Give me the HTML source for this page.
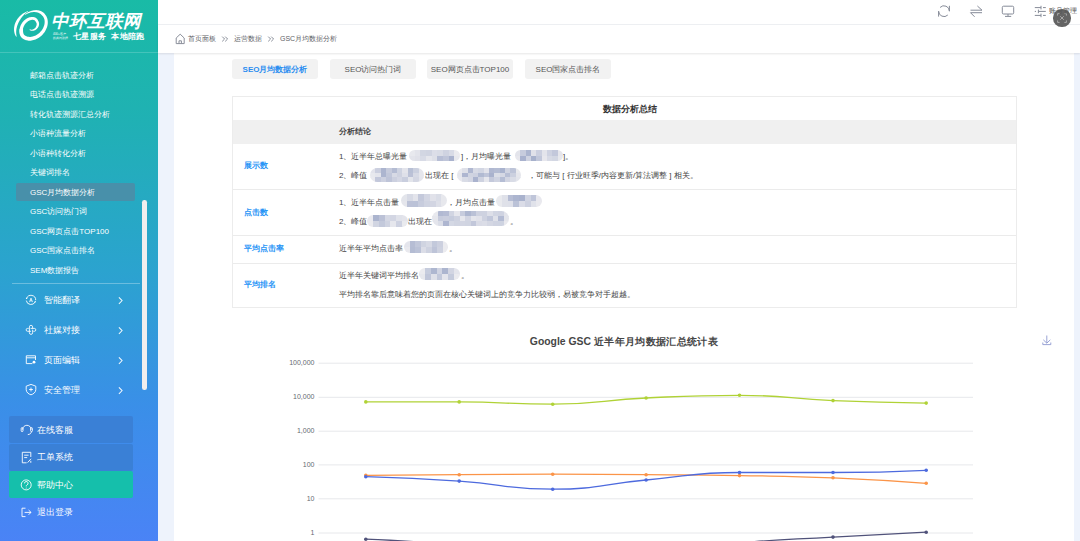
<!DOCTYPE html>
<html><head><meta charset="utf-8">
<style>
*{margin:0;padding:0;box-sizing:border-box}
html,body{width:1080px;height:541px;overflow:hidden;background:#fff;font-family:"Liberation Sans",sans-serif}
.abs{position:absolute}
#side{position:absolute;left:0;top:0;width:158px;height:541px;background:linear-gradient(180deg,#19bba6 0%,#1fb2b2 20%,#2ba3cf 50%,#3a8fe8 75%,#4a83f6 100%)}
.mi{position:absolute;left:30px;font-size:8px;color:#fff;white-space:nowrap;line-height:10px}
.sep{position:absolute;left:0;width:158px;height:1px;background:rgba(255,255,255,0.18)}
.grp{position:absolute;left:43.5px;font-size:9.4px;color:#fff;line-height:12px;white-space:nowrap;margin-top:0.3px}
.arr{position:absolute;left:116.5px;width:4.5px;height:4.5px;border-right:0.9px solid rgba(255,255,255,0.95);border-top:0.9px solid rgba(255,255,255,0.95);transform:rotate(45deg)}
.btn{position:absolute;left:9px;width:124px;height:27px;border-radius:2px}
.bt{position:absolute;left:36.5px;font-size:9.4px;color:#fff;line-height:12px;white-space:nowrap}
#hdr{position:absolute;left:158px;top:0;width:922px;height:25px;background:#fff;border-bottom:1px solid #eef0f3}
#bc{position:absolute;z-index:2;left:158px;top:25px;width:922px;height:28px;background:#fff;box-shadow:0 1px 2px rgba(0,0,0,0.10)}
.bct{position:absolute;z-index:3;font-size:7px;color:#606266;line-height:9px;white-space:nowrap;top:34px}
#bg{position:absolute;left:158px;top:53px;width:922px;height:488px;background:#eef3fc}
#panel{position:absolute;left:174px;top:53px;width:900px;height:488px;background:#fff}
.tab{position:absolute;top:58.5px;height:20px;width:86px;background:#f2f2f2;border-radius:3px;font-size:8px;color:#555;text-align:center;line-height:21.5px;white-space:nowrap}
#card{position:absolute;left:232px;top:96px;width:785px;height:212px;border:1px solid #ececec;background:#fff}
.t8{position:absolute;font-size:8px;line-height:10px;white-space:nowrap;color:#444;margin-top:0.8px}
.blue{color:#2894f6;font-weight:bold}
.hl{position:absolute;left:233px;width:783px;height:1px;background:#ebebeb}
.blur{position:absolute;filter:blur(1px);background:#c5cad8}
</style></head><body>
<div id="side">
  <svg class="abs" style="left:0;top:0" width="60" height="50" viewBox="0 0 60 50"><path d="M25.30 14.74 L26.28 14.18 L27.27 13.69 L28.27 13.26 L29.28 12.89 L30.27 12.59 L31.26 12.36 L32.24 12.19 L33.20 12.09 L34.13 12.06 L35.04 12.09 L35.91 12.18 L36.75 12.33 L37.55 12.53 L38.30 12.79 L39.00 13.10 L39.66 13.46 L40.28 13.83 L40.87 14.23 L41.41 14.67 L41.90 15.14 L42.35 15.66 L42.86 16.26 L43.25 16.81 L43.60 17.40 L43.90 18.02 L44.15 18.67 L44.36 19.35 L44.51 20.05 L44.61 20.78 L44.66 21.54 L44.66 22.31 L44.60 23.09 L44.49 23.89 L44.33 24.69 L44.11 25.50 L43.84 26.31 L43.52 27.11 L43.15 27.90 L42.74 28.68 L42.27 29.44 L41.76 30.18 L41.22 30.90 L40.63 31.59 L40.01 32.25 L39.35 32.88 L38.67 33.46 L37.96 34.01 L37.23 34.52 L36.49 34.98 L35.73 35.39 L34.96 35.76 L34.18 36.08 L33.41 36.34 L32.64 36.56 L31.87 36.72 L31.12 36.83 L30.38 36.89 L29.66 36.90 L28.96 36.87 L28.29 36.79 L27.64 36.67 L27.02 36.51 L26.43 36.30 L25.88 36.06 L25.36 35.77 L24.87 35.45 L24.42 35.09 L24.00 34.69 L23.90 34.49 L23.64 33.96 L23.43 33.40 L23.26 32.82 L23.14 32.22 L23.06 31.61 L23.03 30.98 L23.04 30.34 L23.10 29.70 L22.96 29.01 L23.10 28.35 L23.28 27.69 L23.51 27.04 L23.77 26.41 L24.07 25.79 L24.41 25.18 L24.77 24.61 L25.17 24.05 L25.59 23.52 L26.03 23.03 L26.50 22.56 L26.98 22.13 L27.47 21.73 L27.96 21.37 L28.47 21.05 L28.97 20.77 L29.48 20.52 L29.98 20.32 L30.47 20.15 L30.95 20.01 L31.41 19.92 L31.86 19.86 L32.28 19.83 L32.69 19.83 L33.07 19.86 L33.43 19.92 L33.76 20.00 L34.06 20.11 L34.34 20.23 L34.59 20.37 L34.82 20.52 L35.03 20.69 L35.21 20.88 L35.37 21.07 L35.51 21.28 L35.63 21.49 L35.72 21.72 L36.08 22.34 L36.20 22.52 L36.31 22.70 L36.41 22.90 L36.49 23.11 L36.56 23.34 L36.61 23.57 L36.65 23.82 L36.67 24.07 L36.66 24.34 L36.64 24.61 L36.61 24.88 L36.55 25.16 L36.47 25.45 L36.39 25.73 L36.30 26.02 L36.18 26.31 L36.05 26.59 L35.90 26.87 L35.74 27.14 L35.56 27.40 L35.36 27.66 L35.16 27.90 L34.94 28.13 L34.71 28.35 L34.48 28.55 L34.23 28.74 L33.98 28.92 L33.73 29.07 L33.47 29.21 L33.21 29.34 L32.94 29.45 L32.68 29.53 L32.42 29.60 L32.16 29.66 L31.91 29.69 L31.66 29.71 L31.42 29.71 L31.18 29.70 L30.95 29.66 L30.73 29.61 L30.51 29.55 L30.31 29.47 L30.11 29.37 L29.93 29.25 L29.48 29.76 L29.68 29.95 L29.90 30.13 L30.14 30.29 L30.40 30.44 L30.67 30.56 L30.96 30.67 L31.27 30.75 L31.58 30.81 L31.91 30.85 L32.25 30.86 L32.59 30.85 L32.94 30.82 L33.30 30.76 L33.65 30.69 L34.01 30.58 L34.37 30.46 L34.73 30.31 L35.08 30.14 L35.43 29.94 L35.77 29.73 L36.10 29.49 L36.43 29.24 L36.74 28.96 L37.04 28.67 L37.32 28.36 L37.60 28.03 L37.85 27.69 L38.09 27.33 L38.30 26.96 L38.50 26.58 L38.67 26.19 L38.81 25.78 L38.91 25.36 L39.00 24.94 L39.05 24.52 L39.08 24.09 L39.08 23.66 L39.04 23.24 L38.98 22.82 L38.88 22.40 L38.75 21.99 L38.59 21.60 L38.39 21.22 L38.17 20.85 L38.18 20.91 L38.01 20.45 L37.80 20.01 L37.55 19.58 L37.25 19.17 L36.91 18.78 L36.52 18.43 L36.10 18.10 L35.64 17.82 L35.14 17.57 L34.62 17.36 L34.06 17.20 L33.48 17.08 L32.88 17.00 L32.26 16.97 L31.63 16.99 L30.98 17.06 L30.32 17.17 L29.65 17.33 L28.98 17.54 L28.31 17.80 L27.63 18.10 L26.97 18.45 L26.31 18.84 L25.66 19.28 L25.02 19.77 L24.41 20.30 L23.81 20.87 L23.24 21.47 L22.69 22.12 L22.18 22.80 L21.70 23.52 L21.26 24.27 L20.86 25.05 L20.50 25.85 L20.19 26.67 L19.93 27.52 L19.73 28.38 L19.34 29.23 L19.26 30.13 L19.24 31.03 L19.29 31.94 L19.40 32.83 L19.58 33.72 L19.83 34.60 L20.16 35.45 L20.56 36.28 L21.27 37.33 L21.93 37.95 L22.64 38.51 L23.39 39.01 L24.19 39.45 L25.03 39.82 L25.91 40.13 L26.81 40.37 L27.74 40.54 L28.68 40.65 L29.65 40.67 L30.62 40.63 L31.60 40.52 L32.59 40.35 L33.57 40.11 L34.54 39.82 L35.51 39.46 L36.46 39.04 L37.40 38.56 L38.32 38.03 L39.21 37.45 L40.08 36.82 L40.91 36.14 L41.71 35.42 L42.48 34.65 L43.20 33.84 L43.89 33.00 L44.52 32.13 L45.11 31.22 L45.64 30.29 L46.12 29.34 L46.55 28.37 L46.91 27.39 L47.22 26.39 L47.46 25.39 L47.64 24.39 L47.75 23.38 L47.80 22.38 L47.78 21.40 L47.69 20.42 L47.52 19.47 L47.29 18.54 L47.00 17.64 L46.63 16.77 L46.19 15.94 L45.69 15.15 L45.13 14.42 L44.59 13.80 L43.96 13.12 L43.26 12.49 L42.51 11.92 L41.71 11.41 L40.85 11.00 L39.94 10.67 L39.00 10.42 L38.04 10.25 L37.05 10.14 L36.04 10.11 L35.03 10.15 L34.00 10.26 L32.96 10.44 L31.93 10.69 L30.90 11.01 L29.87 11.39 L28.85 11.84 L27.85 12.35 L26.86 12.92 L25.90 13.56 L24.96 14.25 Z" fill="#fff"/><path d="M16.66 36.50 L16.59 36.06 L16.51 35.63 L16.43 35.20 L16.36 34.77 L16.30 34.33 L16.26 33.90 L16.22 33.47 L16.20 33.03 L16.18 32.59 L16.18 32.15 L16.18 31.71 L16.20 31.27 L16.23 30.82 L16.27 30.38 L16.32 29.93 L16.38 29.48 L16.45 29.04 L16.53 28.59 L16.62 28.13 L16.72 27.68 L16.83 27.23 L16.95 26.78 L17.08 26.33 L17.22 25.87 L17.37 25.42 L17.53 24.97 L17.70 24.52 L17.88 24.06 L18.07 23.61 L18.26 23.16 L18.47 22.72 L18.68 22.27 L18.91 21.82 L19.14 21.38 L19.38 20.94 L19.63 20.50 L19.89 20.07 L20.16 19.63 L20.43 19.20 L20.72 18.78 L21.01 18.36 L21.31 17.94 L21.62 17.52 L21.94 17.11 L22.26 16.71 L22.59 16.31 L22.93 15.91 L23.28 15.52 L23.63 15.14 L23.99 14.76 L24.36 14.39 L24.73 14.02 L25.11 13.66 L25.49 13.30 L25.88 12.95 L26.28 12.60 L26.67 12.24 L27.10 11.96 L27.55 11.71 L28.01 11.48 L27.78 11.03 L27.32 11.27 L26.86 11.53 L26.39 11.77 L25.88 11.96 L25.38 12.19 L24.89 12.43 L24.41 12.69 L23.93 12.96 L23.46 13.25 L22.99 13.55 L22.53 13.87 L22.08 14.20 L21.64 14.55 L21.20 14.90 L20.77 15.27 L20.36 15.65 L19.95 16.04 L19.55 16.45 L19.16 16.86 L18.79 17.29 L18.42 17.72 L18.07 18.16 L17.73 18.62 L17.40 19.08 L17.09 19.55 L16.78 20.02 L16.50 20.51 L16.22 21.00 L15.97 21.50 L15.72 22.00 L15.49 22.51 L15.28 23.02 L15.08 23.54 L14.90 24.06 L14.74 24.58 L14.59 25.11 L14.46 25.63 L14.34 26.16 L14.25 26.69 L14.17 27.22 L14.10 27.75 L14.06 28.27 L14.03 28.80 L14.02 29.32 L14.03 29.84 L14.05 30.35 L14.09 30.86 L14.15 31.36 L14.23 31.86 L14.32 32.35 L14.43 32.84 L14.56 33.31 L14.70 33.78 L14.86 34.23 L15.04 34.68 L15.23 35.11 L15.45 35.54 L15.67 35.95 L15.92 36.34 L16.21 36.71 Z" fill="#fff"/></svg>
  <div class="abs" style="left:51px;top:10.5px;font-size:17.6px;line-height:20px;color:#fff;font-style:italic;font-weight:900;letter-spacing:0px;white-space:nowrap">中环互联网</div>
  <div class="abs" style="left:53px;top:33px;font-size:3px;line-height:3.5px;color:#fff;white-space:nowrap">400+客户<br>的共同选择</div>
  <div class="abs" style="left:73px;top:32.3px;font-size:8.3px;line-height:9px;font-weight:bold;color:#fff;white-space:nowrap;letter-spacing:0.3px">七星服务&nbsp;&nbsp;本地陪跑</div>
  <div class="sep" style="top:52px"></div>
  <div class="mi" style="top:71px">邮箱点击轨迹分析</div>
  <div class="mi" style="top:90px">电话点击轨迹溯源</div>
  <div class="mi" style="top:110px">转化轨迹溯源汇总分析</div>
  <div class="mi" style="top:129px">小语种流量分析</div>
  <div class="mi" style="top:149px">小语种转化分析</div>
  <div class="mi" style="top:168px">关键词排名</div>
  <div class="abs" style="left:16px;top:183px;width:119.3px;height:18px;background:#4890aa;border-radius:2px"></div>
  <div class="mi" style="top:188px">GSC月均数据分析</div>
  <div class="mi" style="top:207px">GSC访问热门词</div>
  <div class="mi" style="top:227px">GSC网页点击TOP100</div>
  <div class="mi" style="top:246px">GSC国家点击排名</div>
  <div class="mi" style="top:266px">SEM数据报告</div>
  <div class="abs" style="left:11.5px;top:283px;width:128.5px;height:1px;background:rgba(255,255,255,0.3)"></div>
  <div class="abs" style="left:142.3px;top:199.5px;width:4.7px;height:190.5px;background:#f0eeee;border-radius:2.3px"></div>

  <svg class="abs" style="left:0;top:0;z-index:3" width="158" height="541" viewBox="0 0 158 541" fill="none" stroke="#fff" stroke-width="0.9">
    <!-- translate -->
    <path d="M26.6 298.4 A4.7 4.7 0 0 1 35.7 300.2"/>
    <path d="M35.2 301.8 A4.7 4.7 0 0 1 26.3 300.6"/>
    <circle cx="26.6" cy="298.4" r="0.7" fill="#fff" stroke="none"/>
    <circle cx="35.2" cy="301.8" r="0.7" fill="#fff" stroke="none"/>
    <path d="M29.5 302.1 L31 298.1 L32.5 302.1 M30 300.8 H32" stroke-width="0.75"/>
    <!-- link -->
    <g stroke-width="0.85" stroke-linecap="round">
      <path d="M29.4 330.9 V326.9 A1.6 1.6 0 0 1 32.6 326.9 V328.1"/>
      <path d="M31 328.4 H34.35 A1.45 1.45 0 0 1 34.35 331.3 H33.7"/>
      <path d="M32.6 330.1 V332.8 A1.6 1.6 0 0 1 29.4 332.8 V331.8"/>
      <path d="M30.7 331.3 H27.6 A1.45 1.45 0 0 1 27.6 328.4 H28.3"/>
    </g>
    <!-- page edit -->
    <path d="M35.5 360 V355.8 H26.3 V363.6 H32.4"/>
    <path d="M26.3 357.8 H35.5"/>
    <circle cx="34" cy="362.2" r="1.4" fill="#fff" stroke="none"/>
    <!-- shield -->
    <path d="M31 384.4 L35.8 386.2 V389.6 C35.8 392.4 33.2 394.2 31 394.8 C28.8 394.2 26.2 392.4 26.2 389.6 V386.2 Z"/>
    <path d="M31 387.6 V391.4 M29.1 389.5 H32.9"/>
    <!-- headset -->
    <path d="M22.6 429.6 A4.3 4.3 0 0 1 31.2 429.6"/>
    <rect x="21.2" y="427.6" width="1.8" height="4" rx="0.9"/>
    <rect x="30.6" y="427.6" width="1.8" height="4" rx="0.9"/>
    <path d="M31.4 431.6 C31.2 433.4 30 434.4 27.8 434.6"/>
    <!-- doc -->
    <path d="M30.8 457 V452.3 H22.3 V462.8 H26.6"/>
    <path d="M24.2 455.2 H28.6 M24.2 457.6 H27.2"/>
    <path d="M27.6 462.6 L31 458.8"/>
    <path d="M30.8 462.8 V460.8"/>
    <!-- help -->
    <circle cx="26.2" cy="484.9" r="5"/>
    <path d="M24.5 483.4 A1.8 1.8 0 1 1 26.9 485 C26.3 485.3 26.2 485.8 26.2 486.4"/>
    <circle cx="26.2" cy="488" r="0.5" fill="#fff" stroke="none"/>
    <!-- logout -->
    <path d="M25.5 508.2 H22 V516.6 H25.5"/>
    <path d="M24.6 512.4 H31 M28.6 510 L31 512.4 L28.6 514.8"/>
  </svg>
  <div class="grp" style="top:294px">智能翻译</div>
  <div class="arr" style="top:298px"></div>
  <div class="grp" style="top:324px">社媒对接</div>
  <div class="arr" style="top:328px"></div>
  <div class="grp" style="top:354px">页面编辑</div>
  <div class="arr" style="top:358px"></div>
  <div class="grp" style="top:384px">安全管理</div>
  <div class="arr" style="top:388px"></div>
  <div class="btn" style="top:416px;background:#3a80d6"></div>
  <div class="btn" style="top:444px;background:#3a80d6"></div>
  <div class="btn" style="top:471px;background:#15bfab"></div>
  <div class="bt" style="top:424px">在线客服</div>
  <div class="bt" style="top:451px">工单系统</div>
  <div class="bt" style="top:479px">帮助中心</div>
  <div class="bt" style="top:506px">退出登录</div>
</div>

<div id="hdr"></div>
<div id="bc"></div>
<div id="bg"></div>
<div id="panel"></div>
<div class="bct" style="left:188px">首页面板</div>
<svg class="abs" style="left:221px;top:35px;z-index:3" width="8" height="8" viewBox="0 0 8 8" fill="none" stroke="#8a8f9a" stroke-width="1"><path d="M1.2 1.6 L3.6 4 L1.2 6.4 M4.2 1.6 L6.6 4 L4.2 6.4"/></svg>
<div class="bct" style="left:234px">运营数据</div>
<svg class="abs" style="left:267px;top:35px;z-index:3" width="8" height="8" viewBox="0 0 8 8" fill="none" stroke="#8a8f9a" stroke-width="1"><path d="M1.2 1.6 L3.6 4 L1.2 6.4 M4.2 1.6 L6.6 4 L4.2 6.4"/></svg>
<div class="bct" style="left:280px">GSC月均数据分析</div>

<div class="tab" style="left:232px;color:#2a8df0;font-weight:bold">SEO月均数据分析</div>
<div class="tab" style="left:330px">SEO访问热门词</div>
<div class="tab" style="left:427px">SEO网页点击TOP100</div>
<div class="tab" style="left:525px">SEO国家点击排名</div>

<div id="card"></div>
<div class="t8" style="left:603px;top:103px;font-size:9px;font-weight:bold;color:#333">数据分析总结</div>
<div class="abs" style="left:233px;top:120px;width:783px;height:24px;background:#f0f0f0"></div>
<div class="t8" style="left:339px;top:126px;font-weight:bold;color:#444">分析结论</div>


<!-- row 1 -->
<div class="t8 blue" style="left:244px;top:160px">展示数</div>
<div class="t8" style="left:339px;top:151px">1、近半年总曝光量</div>
<div class="t8" style="left:461px;top:151px">]，月均曝光量</div>
<div class="t8" style="left:563px;top:151px">]。</div>
<div class="t8" style="left:339px;top:170px">2、峰值</div>
<div class="t8" style="left:425px;top:170px">出现在 [</div>
<div class="t8" style="left:528px;top:170px">，可能与 [ 行业旺季/内容更新/算法调整 ] 相关。</div>
<div class="hl" style="top:189px"></div>
<!-- row 2 -->
<div class="t8 blue" style="left:244px;top:207px">点击数</div>
<div class="t8" style="left:339px;top:197px">1、近半年点击量</div>
<div class="t8" style="left:447px;top:197px">，月均点击量</div>
<div class="t8" style="left:339px;top:216px">2、峰值</div>
<div class="t8" style="left:408px;top:216px">出现在</div>
<div class="t8" style="left:510px;top:216px">。</div>
<div class="hl" style="top:235px"></div>
<!-- row 3 -->
<div class="t8 blue" style="left:244px;top:243px">平均点击率</div>
<div class="t8" style="left:339px;top:243px">近半年平均点击率</div>
<div class="t8" style="left:449px;top:243px">。</div>
<div class="hl" style="top:263px"></div>
<!-- row 4 -->
<div class="t8 blue" style="left:244px;top:279px">平均排名</div>
<div class="t8" style="left:339px;top:270px">近半年关键词平均排名</div>
<div class="t8" style="left:461px;top:270px">。</div>
<div class="t8" style="left:339px;top:289px">平均排名靠后意味着您的页面在核心关键词上的竞争力比较弱，易被竞争对手超越。</div>

<!-- header icons -->
<svg class="abs" style="left:930px;top:0" width="150" height="30" viewBox="930 0 150 30" fill="none" stroke="#868b98" stroke-width="1">
  <path d="M940.1 7.45 A5.4 5.4 0 0 1 949.4 11.2 V5.8"/>
  <path d="M947.8 15 A5.4 5.4 0 0 1 938.6 11.2 V16.6"/>
  <path d="M970.5 10.2 H982 L977.4 6"/>
  <path d="M982 12.7 H970.5 L974.6 16.8"/>
  <rect x="1002.3" y="6.2" width="11.4" height="7.8" rx="1.2"/>
  <path d="M1008 14 V16 M1005 16.4 H1011.2"/>
  <path d="M1034.8 7.6 H1041 M1043 7.6 H1045.8 M1041 5.8 V9.4"/>
  <path d="M1034.8 11.4 H1036 M1038.4 11.4 H1045.8 M1038.4 9.6 V13.2"/>
  <path d="M1034.8 15.4 H1041 M1043 15.4 H1045.8 M1041 13.6 V17.2"/>
</svg>
<div class="abs" style="left:1053.3px;top:9.4px;width:17.4px;height:17.4px;border-radius:50%;background:#646464;z-index:4"></div>
<svg class="abs" style="left:1053px;top:9px;z-index:4" width="18" height="18" viewBox="0 0 18 18" fill="none" stroke="#b8b8b8" stroke-width="0.8">
  <path d="M4.6 6.6 V4.6 H6.6 M11.4 4.6 H13.4 V6.6 M13.4 11.4 V13.4 H11.4 M6.6 13.4 H4.6 V11.4 M7.2 7.2 L10.8 10.8 M10.8 7.2 L7.2 10.8"/>
</svg>
<div class="abs" style="left:1049px;top:6px;font-size:7.4px;line-height:10px;color:#555;white-space:nowrap;z-index:5">账号管理</div>
<!-- breadcrumb home -->
<svg class="abs" style="left:175px;top:33px;z-index:3" width="11" height="12" viewBox="0 0 11 12" fill="none" stroke="#8a8f9a" stroke-width="1">
  <path d="M1.2 10.6 V5 L5.2 1.2 L9.2 5 V10.6 Z"/>
  <path d="M4 10.6 V7.8 H6.4 V10.6"/>
</svg>
<!-- download icon -->
<svg class="abs" style="left:1040px;top:333px" width="14" height="14" viewBox="0 0 14 14" fill="none" stroke="#8e9ad0" stroke-width="0.9">
  <path d="M6.8 2.5 V10 M3.3 6.8 L6.8 10.2 L10.3 6.8 M2.8 9.5 V11.6 H10.8 V9.5"/>
</svg>
<div class="abs" style="left:409px;top:150px;width:51px;height:11px;border-radius:5.5px;overflow:hidden;filter:blur(0.45px)"><div class="abs" style="left:0.00px;top:0.00px;width:6.17px;height:6.00px;background:rgb(232,233,238)"></div><div class="abs" style="left:5.67px;top:0.00px;width:6.17px;height:6.00px;background:rgb(227,228,235)"></div><div class="abs" style="left:11.33px;top:0.00px;width:6.17px;height:6.00px;background:rgb(210,214,226)"></div><div class="abs" style="left:17.00px;top:0.00px;width:6.17px;height:6.00px;background:rgb(208,212,225)"></div><div class="abs" style="left:22.67px;top:0.00px;width:6.17px;height:6.00px;background:rgb(220,222,232)"></div><div class="abs" style="left:28.33px;top:0.00px;width:6.17px;height:6.00px;background:rgb(217,220,230)"></div><div class="abs" style="left:34.00px;top:0.00px;width:6.17px;height:6.00px;background:rgb(207,211,225)"></div><div class="abs" style="left:39.67px;top:0.00px;width:6.17px;height:6.00px;background:rgb(216,219,230)"></div><div class="abs" style="left:45.33px;top:0.00px;width:6.17px;height:6.00px;background:rgb(235,235,239)"></div><div class="abs" style="left:0.00px;top:5.50px;width:6.17px;height:6.00px;background:rgb(227,228,235)"></div><div class="abs" style="left:5.67px;top:5.50px;width:6.17px;height:6.00px;background:rgb(224,225,233)"></div><div class="abs" style="left:11.33px;top:5.50px;width:6.17px;height:6.00px;background:rgb(216,219,230)"></div><div class="abs" style="left:17.00px;top:5.50px;width:6.17px;height:6.00px;background:rgb(229,230,236)"></div><div class="abs" style="left:22.67px;top:5.50px;width:6.17px;height:6.00px;background:rgb(222,224,232)"></div><div class="abs" style="left:28.33px;top:5.50px;width:6.17px;height:6.00px;background:rgb(183,190,213)"></div><div class="abs" style="left:34.00px;top:5.50px;width:6.17px;height:6.00px;background:rgb(191,197,217)"></div><div class="abs" style="left:39.67px;top:5.50px;width:6.17px;height:6.00px;background:rgb(170,179,206)"></div><div class="abs" style="left:45.33px;top:5.50px;width:6.17px;height:6.00px;background:rgb(232,233,238)"></div></div>
<div class="abs" style="left:515px;top:150px;width:48px;height:11px;border-radius:5.5px;overflow:hidden;filter:blur(0.45px)"><div class="abs" style="left:0.00px;top:0.00px;width:5.83px;height:6.00px;background:rgb(227,228,235)"></div><div class="abs" style="left:5.33px;top:0.00px;width:5.83px;height:6.00px;background:rgb(199,204,221)"></div><div class="abs" style="left:10.67px;top:0.00px;width:5.83px;height:6.00px;background:rgb(172,181,207)"></div><div class="abs" style="left:16.00px;top:0.00px;width:5.83px;height:6.00px;background:rgb(224,225,233)"></div><div class="abs" style="left:21.33px;top:0.00px;width:5.83px;height:6.00px;background:rgb(203,207,223)"></div><div class="abs" style="left:26.67px;top:0.00px;width:5.83px;height:6.00px;background:rgb(227,228,235)"></div><div class="abs" style="left:32.00px;top:0.00px;width:5.83px;height:6.00px;background:rgb(206,210,225)"></div><div class="abs" style="left:37.33px;top:0.00px;width:5.83px;height:6.00px;background:rgb(195,200,219)"></div><div class="abs" style="left:42.67px;top:0.00px;width:5.83px;height:6.00px;background:rgb(230,230,236)"></div><div class="abs" style="left:0.00px;top:5.50px;width:5.83px;height:6.00px;background:rgb(231,231,237)"></div><div class="abs" style="left:5.33px;top:5.50px;width:5.83px;height:6.00px;background:rgb(169,178,206)"></div><div class="abs" style="left:10.67px;top:5.50px;width:5.83px;height:6.00px;background:rgb(207,211,225)"></div><div class="abs" style="left:16.00px;top:5.50px;width:5.83px;height:6.00px;background:rgb(167,177,204)"></div><div class="abs" style="left:21.33px;top:5.50px;width:5.83px;height:6.00px;background:rgb(193,199,218)"></div><div class="abs" style="left:26.67px;top:5.50px;width:5.83px;height:6.00px;background:rgb(231,231,237)"></div><div class="abs" style="left:32.00px;top:5.50px;width:5.83px;height:6.00px;background:rgb(215,218,229)"></div><div class="abs" style="left:37.33px;top:5.50px;width:5.83px;height:6.00px;background:rgb(211,215,227)"></div><div class="abs" style="left:42.67px;top:5.50px;width:5.83px;height:6.00px;background:rgb(231,232,237)"></div></div>
<div class="abs" style="left:370px;top:168px;width:54px;height:14px;border-radius:7.0px;overflow:hidden;filter:blur(0.45px)"><div class="abs" style="left:0.00px;top:0.00px;width:5.90px;height:5.17px;background:rgb(226,227,235)"></div><div class="abs" style="left:5.40px;top:0.00px;width:5.90px;height:5.17px;background:rgb(203,207,223)"></div><div class="abs" style="left:10.80px;top:0.00px;width:5.90px;height:5.17px;background:rgb(172,181,207)"></div><div class="abs" style="left:16.20px;top:0.00px;width:5.90px;height:5.17px;background:rgb(198,203,220)"></div><div class="abs" style="left:21.60px;top:0.00px;width:5.90px;height:5.17px;background:rgb(180,188,211)"></div><div class="abs" style="left:27.00px;top:0.00px;width:5.90px;height:5.17px;background:rgb(206,211,225)"></div><div class="abs" style="left:32.40px;top:0.00px;width:5.90px;height:5.17px;background:rgb(227,228,235)"></div><div class="abs" style="left:37.80px;top:0.00px;width:5.90px;height:5.17px;background:rgb(184,192,213)"></div><div class="abs" style="left:43.20px;top:0.00px;width:5.90px;height:5.17px;background:rgb(203,208,223)"></div><div class="abs" style="left:48.60px;top:0.00px;width:5.90px;height:5.17px;background:rgb(229,230,236)"></div><div class="abs" style="left:0.00px;top:4.67px;width:5.90px;height:5.17px;background:rgb(232,233,238)"></div><div class="abs" style="left:5.40px;top:4.67px;width:5.90px;height:5.17px;background:rgb(228,229,236)"></div><div class="abs" style="left:10.80px;top:4.67px;width:5.90px;height:5.17px;background:rgb(172,181,207)"></div><div class="abs" style="left:16.20px;top:4.67px;width:5.90px;height:5.17px;background:rgb(193,199,218)"></div><div class="abs" style="left:21.60px;top:4.67px;width:5.90px;height:5.17px;background:rgb(215,218,229)"></div><div class="abs" style="left:27.00px;top:4.67px;width:5.90px;height:5.17px;background:rgb(206,210,224)"></div><div class="abs" style="left:32.40px;top:4.67px;width:5.90px;height:5.17px;background:rgb(222,224,233)"></div><div class="abs" style="left:37.80px;top:4.67px;width:5.90px;height:5.17px;background:rgb(187,193,214)"></div><div class="abs" style="left:43.20px;top:4.67px;width:5.90px;height:5.17px;background:rgb(215,218,229)"></div><div class="abs" style="left:48.60px;top:4.67px;width:5.90px;height:5.17px;background:rgb(229,230,236)"></div><div class="abs" style="left:0.00px;top:9.33px;width:5.90px;height:5.17px;background:rgb(234,234,239)"></div><div class="abs" style="left:5.40px;top:9.33px;width:5.90px;height:5.17px;background:rgb(195,200,219)"></div><div class="abs" style="left:10.80px;top:9.33px;width:5.90px;height:5.17px;background:rgb(205,209,224)"></div><div class="abs" style="left:16.20px;top:9.33px;width:5.90px;height:5.17px;background:rgb(190,196,216)"></div><div class="abs" style="left:21.60px;top:9.33px;width:5.90px;height:5.17px;background:rgb(204,208,223)"></div><div class="abs" style="left:27.00px;top:9.33px;width:5.90px;height:5.17px;background:rgb(212,215,228)"></div><div class="abs" style="left:32.40px;top:9.33px;width:5.90px;height:5.17px;background:rgb(201,206,222)"></div><div class="abs" style="left:37.80px;top:9.33px;width:5.90px;height:5.17px;background:rgb(227,229,235)"></div><div class="abs" style="left:43.20px;top:9.33px;width:5.90px;height:5.17px;background:rgb(212,215,227)"></div><div class="abs" style="left:48.60px;top:9.33px;width:5.90px;height:5.17px;background:rgb(228,229,236)"></div></div>
<div class="abs" style="left:457px;top:168px;width:64px;height:14px;border-radius:7.0px;overflow:hidden;filter:blur(0.45px)"><div class="abs" style="left:0.00px;top:0.00px;width:5.83px;height:5.17px;background:rgb(233,233,238)"></div><div class="abs" style="left:5.33px;top:0.00px;width:5.83px;height:5.17px;background:rgb(222,224,232)"></div><div class="abs" style="left:10.67px;top:0.00px;width:5.83px;height:5.17px;background:rgb(176,184,209)"></div><div class="abs" style="left:16.00px;top:0.00px;width:5.83px;height:5.17px;background:rgb(215,218,229)"></div><div class="abs" style="left:21.33px;top:0.00px;width:5.83px;height:5.17px;background:rgb(210,214,227)"></div><div class="abs" style="left:26.67px;top:0.00px;width:5.83px;height:5.17px;background:rgb(226,227,235)"></div><div class="abs" style="left:32.00px;top:0.00px;width:5.83px;height:5.17px;background:rgb(176,184,209)"></div><div class="abs" style="left:37.33px;top:0.00px;width:5.83px;height:5.17px;background:rgb(180,188,211)"></div><div class="abs" style="left:42.67px;top:0.00px;width:5.83px;height:5.17px;background:rgb(169,179,206)"></div><div class="abs" style="left:48.00px;top:0.00px;width:5.83px;height:5.17px;background:rgb(207,211,225)"></div><div class="abs" style="left:53.33px;top:0.00px;width:5.83px;height:5.17px;background:rgb(189,196,216)"></div><div class="abs" style="left:58.67px;top:0.00px;width:5.83px;height:5.17px;background:rgb(233,234,238)"></div><div class="abs" style="left:0.00px;top:4.67px;width:5.83px;height:5.17px;background:rgb(229,230,236)"></div><div class="abs" style="left:5.33px;top:4.67px;width:5.83px;height:5.17px;background:rgb(174,182,208)"></div><div class="abs" style="left:10.67px;top:4.67px;width:5.83px;height:5.17px;background:rgb(208,212,225)"></div><div class="abs" style="left:16.00px;top:4.67px;width:5.83px;height:5.17px;background:rgb(205,209,224)"></div><div class="abs" style="left:21.33px;top:4.67px;width:5.83px;height:5.17px;background:rgb(177,186,210)"></div><div class="abs" style="left:26.67px;top:4.67px;width:5.83px;height:5.17px;background:rgb(191,197,217)"></div><div class="abs" style="left:32.00px;top:4.67px;width:5.83px;height:5.17px;background:rgb(169,178,205)"></div><div class="abs" style="left:37.33px;top:4.67px;width:5.83px;height:5.17px;background:rgb(219,222,231)"></div><div class="abs" style="left:42.67px;top:4.67px;width:5.83px;height:5.17px;background:rgb(213,216,228)"></div><div class="abs" style="left:48.00px;top:4.67px;width:5.83px;height:5.17px;background:rgb(184,191,213)"></div><div class="abs" style="left:53.33px;top:4.67px;width:5.83px;height:5.17px;background:rgb(203,208,223)"></div><div class="abs" style="left:58.67px;top:4.67px;width:5.83px;height:5.17px;background:rgb(229,230,236)"></div><div class="abs" style="left:0.00px;top:9.33px;width:5.83px;height:5.17px;background:rgb(232,232,238)"></div><div class="abs" style="left:5.33px;top:9.33px;width:5.83px;height:5.17px;background:rgb(217,220,230)"></div><div class="abs" style="left:10.67px;top:9.33px;width:5.83px;height:5.17px;background:rgb(211,214,227)"></div><div class="abs" style="left:16.00px;top:9.33px;width:5.83px;height:5.17px;background:rgb(170,179,206)"></div><div class="abs" style="left:21.33px;top:9.33px;width:5.83px;height:5.17px;background:rgb(206,210,224)"></div><div class="abs" style="left:26.67px;top:9.33px;width:5.83px;height:5.17px;background:rgb(230,231,237)"></div><div class="abs" style="left:32.00px;top:9.33px;width:5.83px;height:5.17px;background:rgb(196,201,219)"></div><div class="abs" style="left:37.33px;top:9.33px;width:5.83px;height:5.17px;background:rgb(207,211,225)"></div><div class="abs" style="left:42.67px;top:9.33px;width:5.83px;height:5.17px;background:rgb(181,189,212)"></div><div class="abs" style="left:48.00px;top:9.33px;width:5.83px;height:5.17px;background:rgb(210,213,226)"></div><div class="abs" style="left:53.33px;top:9.33px;width:5.83px;height:5.17px;background:rgb(217,220,230)"></div><div class="abs" style="left:58.67px;top:9.33px;width:5.83px;height:5.17px;background:rgb(226,228,235)"></div></div>
<div class="abs" style="left:401px;top:194px;width:46px;height:13px;border-radius:6.5px;overflow:hidden;filter:blur(0.45px)"><div class="abs" style="left:0.00px;top:0.00px;width:6.25px;height:7.00px;background:rgb(227,229,235)"></div><div class="abs" style="left:5.75px;top:0.00px;width:6.25px;height:7.00px;background:rgb(215,218,229)"></div><div class="abs" style="left:11.50px;top:0.00px;width:6.25px;height:7.00px;background:rgb(227,228,235)"></div><div class="abs" style="left:17.25px;top:0.00px;width:6.25px;height:7.00px;background:rgb(196,201,219)"></div><div class="abs" style="left:23.00px;top:0.00px;width:6.25px;height:7.00px;background:rgb(211,214,227)"></div><div class="abs" style="left:28.75px;top:0.00px;width:6.25px;height:7.00px;background:rgb(225,226,234)"></div><div class="abs" style="left:34.50px;top:0.00px;width:6.25px;height:7.00px;background:rgb(218,221,231)"></div><div class="abs" style="left:40.25px;top:0.00px;width:6.25px;height:7.00px;background:rgb(231,232,237)"></div><div class="abs" style="left:0.00px;top:6.50px;width:6.25px;height:7.00px;background:rgb(229,230,236)"></div><div class="abs" style="left:5.75px;top:6.50px;width:6.25px;height:7.00px;background:rgb(188,194,215)"></div><div class="abs" style="left:11.50px;top:6.50px;width:6.25px;height:7.00px;background:rgb(187,194,215)"></div><div class="abs" style="left:17.25px;top:6.50px;width:6.25px;height:7.00px;background:rgb(199,204,221)"></div><div class="abs" style="left:23.00px;top:6.50px;width:6.25px;height:7.00px;background:rgb(207,211,225)"></div><div class="abs" style="left:28.75px;top:6.50px;width:6.25px;height:7.00px;background:rgb(210,213,226)"></div><div class="abs" style="left:34.50px;top:6.50px;width:6.25px;height:7.00px;background:rgb(221,223,232)"></div><div class="abs" style="left:40.25px;top:6.50px;width:6.25px;height:7.00px;background:rgb(231,232,237)"></div></div>
<div class="abs" style="left:496px;top:195px;width:46px;height:12px;border-radius:6.0px;overflow:hidden;filter:blur(0.45px)"><div class="abs" style="left:0.00px;top:0.00px;width:6.25px;height:6.50px;background:rgb(233,234,238)"></div><div class="abs" style="left:5.75px;top:0.00px;width:6.25px;height:6.50px;background:rgb(223,225,233)"></div><div class="abs" style="left:11.50px;top:0.00px;width:6.25px;height:6.50px;background:rgb(182,189,212)"></div><div class="abs" style="left:17.25px;top:0.00px;width:6.25px;height:6.50px;background:rgb(172,181,207)"></div><div class="abs" style="left:23.00px;top:0.00px;width:6.25px;height:6.50px;background:rgb(169,178,205)"></div><div class="abs" style="left:28.75px;top:0.00px;width:6.25px;height:6.50px;background:rgb(208,212,226)"></div><div class="abs" style="left:34.50px;top:0.00px;width:6.25px;height:6.50px;background:rgb(191,197,217)"></div><div class="abs" style="left:40.25px;top:0.00px;width:6.25px;height:6.50px;background:rgb(232,232,238)"></div><div class="abs" style="left:0.00px;top:6.00px;width:6.25px;height:6.50px;background:rgb(233,234,238)"></div><div class="abs" style="left:5.75px;top:6.00px;width:6.25px;height:6.50px;background:rgb(223,225,233)"></div><div class="abs" style="left:11.50px;top:6.00px;width:6.25px;height:6.50px;background:rgb(222,224,233)"></div><div class="abs" style="left:17.25px;top:6.00px;width:6.25px;height:6.50px;background:rgb(187,194,215)"></div><div class="abs" style="left:23.00px;top:6.00px;width:6.25px;height:6.50px;background:rgb(218,220,231)"></div><div class="abs" style="left:28.75px;top:6.00px;width:6.25px;height:6.50px;background:rgb(205,209,224)"></div><div class="abs" style="left:34.50px;top:6.00px;width:6.25px;height:6.50px;background:rgb(224,226,234)"></div><div class="abs" style="left:40.25px;top:6.00px;width:6.25px;height:6.50px;background:rgb(233,233,238)"></div></div>
<div class="abs" style="left:367px;top:215px;width:41px;height:12px;border-radius:6.0px;overflow:hidden;filter:blur(0.45px)"><div class="abs" style="left:0.00px;top:0.00px;width:6.36px;height:6.50px;background:rgb(234,234,239)"></div><div class="abs" style="left:5.86px;top:0.00px;width:6.36px;height:6.50px;background:rgb(171,180,206)"></div><div class="abs" style="left:11.71px;top:0.00px;width:6.36px;height:6.50px;background:rgb(187,193,214)"></div><div class="abs" style="left:17.57px;top:0.00px;width:6.36px;height:6.50px;background:rgb(213,216,228)"></div><div class="abs" style="left:23.43px;top:0.00px;width:6.36px;height:6.50px;background:rgb(211,214,227)"></div><div class="abs" style="left:29.29px;top:0.00px;width:6.36px;height:6.50px;background:rgb(224,226,234)"></div><div class="abs" style="left:35.14px;top:0.00px;width:6.36px;height:6.50px;background:rgb(227,228,235)"></div><div class="abs" style="left:0.00px;top:6.00px;width:6.36px;height:6.50px;background:rgb(235,235,239)"></div><div class="abs" style="left:5.86px;top:6.00px;width:6.36px;height:6.50px;background:rgb(209,213,226)"></div><div class="abs" style="left:11.71px;top:6.00px;width:6.36px;height:6.50px;background:rgb(195,201,219)"></div><div class="abs" style="left:17.57px;top:6.00px;width:6.36px;height:6.50px;background:rgb(207,211,225)"></div><div class="abs" style="left:23.43px;top:6.00px;width:6.36px;height:6.50px;background:rgb(230,231,237)"></div><div class="abs" style="left:29.29px;top:6.00px;width:6.36px;height:6.50px;background:rgb(206,210,225)"></div><div class="abs" style="left:35.14px;top:6.00px;width:6.36px;height:6.50px;background:rgb(233,234,238)"></div></div>
<div class="abs" style="left:432px;top:211px;width:77px;height:15px;border-radius:7.5px;overflow:hidden;filter:blur(0.45px)"><div class="abs" style="left:0.00px;top:0.00px;width:6.00px;height:5.50px;background:rgb(232,233,238)"></div><div class="abs" style="left:5.50px;top:0.00px;width:6.00px;height:5.50px;background:rgb(177,185,210)"></div><div class="abs" style="left:11.00px;top:0.00px;width:6.00px;height:5.50px;background:rgb(181,188,212)"></div><div class="abs" style="left:16.50px;top:0.00px;width:6.00px;height:5.50px;background:rgb(209,213,226)"></div><div class="abs" style="left:22.00px;top:0.00px;width:6.00px;height:5.50px;background:rgb(230,231,237)"></div><div class="abs" style="left:27.50px;top:0.00px;width:6.00px;height:5.50px;background:rgb(199,204,221)"></div><div class="abs" style="left:33.00px;top:0.00px;width:6.00px;height:5.50px;background:rgb(174,183,208)"></div><div class="abs" style="left:38.50px;top:0.00px;width:6.00px;height:5.50px;background:rgb(186,193,214)"></div><div class="abs" style="left:44.00px;top:0.00px;width:6.00px;height:5.50px;background:rgb(206,210,224)"></div><div class="abs" style="left:49.50px;top:0.00px;width:6.00px;height:5.50px;background:rgb(206,210,224)"></div><div class="abs" style="left:55.00px;top:0.00px;width:6.00px;height:5.50px;background:rgb(221,223,232)"></div><div class="abs" style="left:60.50px;top:0.00px;width:6.00px;height:5.50px;background:rgb(209,213,226)"></div><div class="abs" style="left:66.00px;top:0.00px;width:6.00px;height:5.50px;background:rgb(207,211,225)"></div><div class="abs" style="left:71.50px;top:0.00px;width:6.00px;height:5.50px;background:rgb(227,228,235)"></div><div class="abs" style="left:0.00px;top:5.00px;width:6.00px;height:5.50px;background:rgb(229,230,236)"></div><div class="abs" style="left:5.50px;top:5.00px;width:6.00px;height:5.50px;background:rgb(199,204,221)"></div><div class="abs" style="left:11.00px;top:5.00px;width:6.00px;height:5.50px;background:rgb(202,206,222)"></div><div class="abs" style="left:16.50px;top:5.00px;width:6.00px;height:5.50px;background:rgb(198,204,221)"></div><div class="abs" style="left:22.00px;top:5.00px;width:6.00px;height:5.50px;background:rgb(206,210,224)"></div><div class="abs" style="left:27.50px;top:5.00px;width:6.00px;height:5.50px;background:rgb(230,231,237)"></div><div class="abs" style="left:33.00px;top:5.00px;width:6.00px;height:5.50px;background:rgb(210,213,226)"></div><div class="abs" style="left:38.50px;top:5.00px;width:6.00px;height:5.50px;background:rgb(229,230,236)"></div><div class="abs" style="left:44.00px;top:5.00px;width:6.00px;height:5.50px;background:rgb(225,226,234)"></div><div class="abs" style="left:49.50px;top:5.00px;width:6.00px;height:5.50px;background:rgb(206,210,224)"></div><div class="abs" style="left:55.00px;top:5.00px;width:6.00px;height:5.50px;background:rgb(193,199,218)"></div><div class="abs" style="left:60.50px;top:5.00px;width:6.00px;height:5.50px;background:rgb(223,225,233)"></div><div class="abs" style="left:66.00px;top:5.00px;width:6.00px;height:5.50px;background:rgb(179,187,211)"></div><div class="abs" style="left:71.50px;top:5.00px;width:6.00px;height:5.50px;background:rgb(228,229,235)"></div><div class="abs" style="left:0.00px;top:10.00px;width:6.00px;height:5.50px;background:rgb(228,229,236)"></div><div class="abs" style="left:5.50px;top:10.00px;width:6.00px;height:5.50px;background:rgb(218,221,231)"></div><div class="abs" style="left:11.00px;top:10.00px;width:6.00px;height:5.50px;background:rgb(174,182,208)"></div><div class="abs" style="left:16.50px;top:10.00px;width:6.00px;height:5.50px;background:rgb(212,216,228)"></div><div class="abs" style="left:22.00px;top:10.00px;width:6.00px;height:5.50px;background:rgb(208,212,225)"></div><div class="abs" style="left:27.50px;top:10.00px;width:6.00px;height:5.50px;background:rgb(210,213,226)"></div><div class="abs" style="left:33.00px;top:10.00px;width:6.00px;height:5.50px;background:rgb(208,212,225)"></div><div class="abs" style="left:38.50px;top:10.00px;width:6.00px;height:5.50px;background:rgb(194,199,218)"></div><div class="abs" style="left:44.00px;top:10.00px;width:6.00px;height:5.50px;background:rgb(217,219,230)"></div><div class="abs" style="left:49.50px;top:10.00px;width:6.00px;height:5.50px;background:rgb(219,221,231)"></div><div class="abs" style="left:55.00px;top:10.00px;width:6.00px;height:5.50px;background:rgb(212,215,227)"></div><div class="abs" style="left:60.50px;top:10.00px;width:6.00px;height:5.50px;background:rgb(207,211,225)"></div><div class="abs" style="left:66.00px;top:10.00px;width:6.00px;height:5.50px;background:rgb(206,211,225)"></div><div class="abs" style="left:71.50px;top:10.00px;width:6.00px;height:5.50px;background:rgb(233,233,238)"></div></div>
<div class="abs" style="left:404px;top:241px;width:44px;height:12px;border-radius:6.0px;overflow:hidden;filter:blur(0.45px)"><div class="abs" style="left:0.00px;top:0.00px;width:6.00px;height:6.50px;background:rgb(228,229,236)"></div><div class="abs" style="left:5.50px;top:0.00px;width:6.00px;height:6.50px;background:rgb(182,189,212)"></div><div class="abs" style="left:11.00px;top:0.00px;width:6.00px;height:6.50px;background:rgb(193,199,218)"></div><div class="abs" style="left:16.50px;top:0.00px;width:6.00px;height:6.50px;background:rgb(208,212,225)"></div><div class="abs" style="left:22.00px;top:0.00px;width:6.00px;height:6.50px;background:rgb(215,218,229)"></div><div class="abs" style="left:27.50px;top:0.00px;width:6.00px;height:6.50px;background:rgb(195,201,219)"></div><div class="abs" style="left:33.00px;top:0.00px;width:6.00px;height:6.50px;background:rgb(204,208,223)"></div><div class="abs" style="left:38.50px;top:0.00px;width:6.00px;height:6.50px;background:rgb(235,235,239)"></div><div class="abs" style="left:0.00px;top:6.00px;width:6.00px;height:6.50px;background:rgb(233,233,238)"></div><div class="abs" style="left:5.50px;top:6.00px;width:6.00px;height:6.50px;background:rgb(180,188,211)"></div><div class="abs" style="left:11.00px;top:6.00px;width:6.00px;height:6.50px;background:rgb(187,194,215)"></div><div class="abs" style="left:16.50px;top:6.00px;width:6.00px;height:6.50px;background:rgb(219,221,231)"></div><div class="abs" style="left:22.00px;top:6.00px;width:6.00px;height:6.50px;background:rgb(206,210,224)"></div><div class="abs" style="left:27.50px;top:6.00px;width:6.00px;height:6.50px;background:rgb(190,196,216)"></div><div class="abs" style="left:33.00px;top:6.00px;width:6.00px;height:6.50px;background:rgb(206,210,224)"></div><div class="abs" style="left:38.50px;top:6.00px;width:6.00px;height:6.50px;background:rgb(235,235,239)"></div></div>
<div class="abs" style="left:419px;top:268px;width:41px;height:12px;border-radius:6.0px;overflow:hidden;filter:blur(0.45px)"><div class="abs" style="left:0.00px;top:0.00px;width:6.36px;height:6.50px;background:rgb(235,235,239)"></div><div class="abs" style="left:5.86px;top:0.00px;width:6.36px;height:6.50px;background:rgb(198,204,221)"></div><div class="abs" style="left:11.71px;top:0.00px;width:6.36px;height:6.50px;background:rgb(174,183,208)"></div><div class="abs" style="left:17.57px;top:0.00px;width:6.36px;height:6.50px;background:rgb(208,212,226)"></div><div class="abs" style="left:23.43px;top:0.00px;width:6.36px;height:6.50px;background:rgb(172,181,207)"></div><div class="abs" style="left:29.29px;top:0.00px;width:6.36px;height:6.50px;background:rgb(210,213,226)"></div><div class="abs" style="left:35.14px;top:0.00px;width:6.36px;height:6.50px;background:rgb(228,229,236)"></div><div class="abs" style="left:0.00px;top:6.00px;width:6.36px;height:6.50px;background:rgb(231,232,237)"></div><div class="abs" style="left:5.86px;top:6.00px;width:6.36px;height:6.50px;background:rgb(192,198,217)"></div><div class="abs" style="left:11.71px;top:6.00px;width:6.36px;height:6.50px;background:rgb(223,225,233)"></div><div class="abs" style="left:17.57px;top:6.00px;width:6.36px;height:6.50px;background:rgb(195,201,219)"></div><div class="abs" style="left:23.43px;top:6.00px;width:6.36px;height:6.50px;background:rgb(228,229,236)"></div><div class="abs" style="left:29.29px;top:6.00px;width:6.36px;height:6.50px;background:rgb(197,203,220)"></div><div class="abs" style="left:35.14px;top:6.00px;width:6.36px;height:6.50px;background:rgb(235,235,239)"></div></div>
<svg class="abs" style="left:0;top:0" width="1080" height="541" viewBox="0 0 1080 541">
<line x1="318.5" y1="363.2" x2="973" y2="363.2" stroke="#e7e8eb" stroke-width="1"/>
<line x1="318.5" y1="397.3" x2="973" y2="397.3" stroke="#e7e8eb" stroke-width="1"/>
<line x1="318.5" y1="431.2" x2="973" y2="431.2" stroke="#e7e8eb" stroke-width="1"/>
<line x1="318.5" y1="464.9" x2="973" y2="464.9" stroke="#e7e8eb" stroke-width="1"/>
<line x1="318.5" y1="498.8" x2="973" y2="498.8" stroke="#e7e8eb" stroke-width="1"/>
<line x1="318.5" y1="533" x2="973" y2="533" stroke="#e7e8eb" stroke-width="1"/>
<text x="314.5" y="365.0" text-anchor="end" font-family="Liberation Sans" font-size="7" fill="#666a72">100,000</text>
<text x="314.5" y="399.1" text-anchor="end" font-family="Liberation Sans" font-size="7" fill="#666a72">10,000</text>
<text x="314.5" y="433.0" text-anchor="end" font-family="Liberation Sans" font-size="7" fill="#666a72">1,000</text>
<text x="314.5" y="466.7" text-anchor="end" font-family="Liberation Sans" font-size="7" fill="#666a72">100</text>
<text x="314.5" y="500.6" text-anchor="end" font-family="Liberation Sans" font-size="7" fill="#666a72">10</text>
<text x="314.5" y="534.8" text-anchor="end" font-family="Liberation Sans" font-size="7" fill="#666a72">1</text>
<path d="M365.80 401.90 C365.80 401.90 412.51 401.90 459.20 401.90 C505.96 401.90 505.99 404.20 552.70 404.20 C599.44 404.20 599.36 400.23 646.10 398.00 C692.76 395.78 692.83 395.30 739.50 395.30 C786.28 395.30 786.22 398.65 833.00 400.60 C879.57 402.55 926.20 403.10 926.20 403.10" fill="none" stroke="#b0d236" stroke-width="1.3"/>
<circle cx="365.8" cy="401.9" r="1.8" fill="#b0d236"/>
<circle cx="459.2" cy="401.9" r="1.8" fill="#b0d236"/>
<circle cx="552.7" cy="404.2" r="1.8" fill="#b0d236"/>
<circle cx="646.1" cy="398" r="1.8" fill="#b0d236"/>
<circle cx="739.5" cy="395.3" r="1.8" fill="#b0d236"/>
<circle cx="833" cy="400.6" r="1.8" fill="#b0d236"/>
<circle cx="926.2" cy="403.1" r="1.8" fill="#b0d236"/>
<path d="M365.80 475.30 C365.80 475.30 412.50 474.97 459.20 474.70 C505.95 474.42 505.95 474.20 552.70 474.20 C599.40 474.20 599.40 474.35 646.10 474.70 C692.80 475.05 692.81 474.83 739.50 475.60 C786.26 476.38 786.28 475.87 833.00 477.80 C879.63 479.72 926.20 483.30 926.20 483.30" fill="none" stroke="#fb9448" stroke-width="1.3"/>
<circle cx="365.8" cy="475.3" r="1.8" fill="#fb9448"/>
<circle cx="459.2" cy="474.7" r="1.8" fill="#fb9448"/>
<circle cx="552.7" cy="474.2" r="1.8" fill="#fb9448"/>
<circle cx="646.1" cy="474.7" r="1.8" fill="#fb9448"/>
<circle cx="739.5" cy="475.6" r="1.8" fill="#fb9448"/>
<circle cx="833" cy="477.8" r="1.8" fill="#fb9448"/>
<circle cx="926.2" cy="483.3" r="1.8" fill="#fb9448"/>
<path d="M365.80 476.70 C365.80 476.70 412.56 477.98 459.20 481.10 C506.01 484.23 505.98 489.20 552.70 489.20 C599.43 489.20 599.36 484.18 646.10 480.00 C692.76 475.83 692.72 472.50 739.50 472.50 C786.17 472.50 786.26 472.50 833.00 472.50 C879.61 472.50 926.20 470.30 926.20 470.30" fill="none" stroke="#4d6ade" stroke-width="1.3"/>
<circle cx="365.8" cy="476.7" r="1.8" fill="#4d6ade"/>
<circle cx="459.2" cy="481.1" r="1.8" fill="#4d6ade"/>
<circle cx="552.7" cy="489.2" r="1.8" fill="#4d6ade"/>
<circle cx="646.1" cy="480" r="1.8" fill="#4d6ade"/>
<circle cx="739.5" cy="472.5" r="1.8" fill="#4d6ade"/>
<circle cx="833" cy="472.5" r="1.8" fill="#4d6ade"/>
<circle cx="926.2" cy="470.3" r="1.8" fill="#4d6ade"/>
<path d="M365.80 539.20 C365.80 539.20 412.59 541.06 459.20 545.00 C506.04 548.96 505.82 555.00 552.70 555.00 C599.27 555.00 599.59 555.00 646.10 555.00 C692.99 555.00 692.66 547.49 739.50 543.00 C786.11 538.54 786.24 539.81 833.00 537.10 C879.59 534.41 926.20 532.20 926.20 532.20" fill="none" stroke="#50527a" stroke-width="1.3"/>
<circle cx="365.8" cy="539.2" r="1.8" fill="#50527a"/>
<circle cx="459.2" cy="545" r="1.8" fill="#50527a"/>
<circle cx="552.7" cy="555" r="1.8" fill="#50527a"/>
<circle cx="646.1" cy="555" r="1.8" fill="#50527a"/>
<circle cx="739.5" cy="543" r="1.8" fill="#50527a"/>
<circle cx="833" cy="537.1" r="1.8" fill="#50527a"/>
<circle cx="926.2" cy="532.2" r="1.8" fill="#50527a"/>
<text x="624" y="345" text-anchor="middle" font-family="Liberation Sans" font-size="10.4" font-weight="bold" fill="#464646">Google GSC <tspan letter-spacing="0.35">近半年月均数据汇总统计表</tspan></text>
</svg>
</body></html>
